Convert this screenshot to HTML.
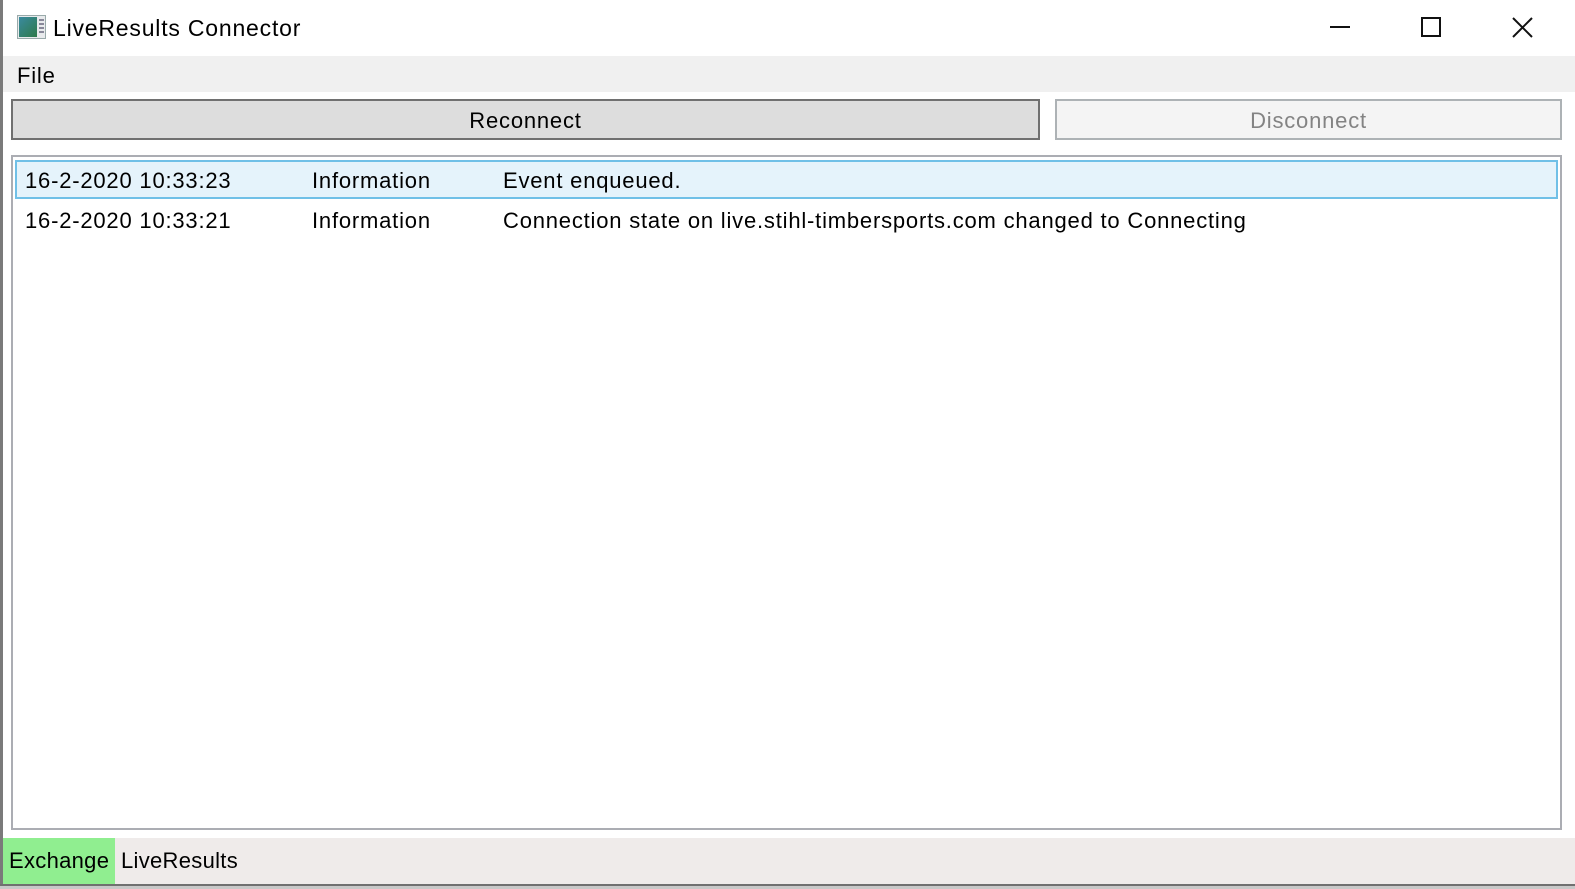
<!DOCTYPE html>
<html><head><style>
*{margin:0;padding:0;box-sizing:border-box}
body{width:1575px;height:889px;overflow:hidden;background:#fff;font-family:"Liberation Sans",sans-serif;position:relative;color:#000}
div{position:absolute}
.t{font-size:22px;white-space:nowrap;letter-spacing:0.8px}
</style></head><body>
<div style="left:0;top:0;width:3px;height:889px;background:#7a7a7a"></div>
<div style="left:17px;top:15px;width:29px;height:24px;background:#e8eaec;border:1px solid #9aa"></div>
<div style="left:19px;top:17px;width:18px;height:20px;background:linear-gradient(135deg,#3a8aa0,#2e7a4a)"></div>
<div style="left:39px;top:19px;width:5px;height:2px;background:#889;box-shadow:0 4px #889,0 8px #889,0 12px #889"></div>
<div class="t" style="left:53px;top:15px;font-size:23px">LiveResults Connector</div>
<svg style="position:absolute;left:1320px;top:10px" width="230" height="36">
<line x1="10" y1="17" x2="30" y2="17" stroke="#111" stroke-width="2"/>
<rect x="102" y="8" width="18" height="18" fill="none" stroke="#111" stroke-width="2"/>
<path d="M193 8 L212 27 M212 8 L193 27" stroke="#111" stroke-width="2"/>
</svg>
<div style="left:3px;top:56px;width:1572px;height:36px;background:#f0f0f0"></div>
<div class="t" style="left:17px;top:63px">File</div>
<div style="left:11px;top:99px;width:1029px;height:41px;background:#dddddd;border:2px solid #707070"></div>
<div class="t" style="left:11px;top:108px;width:1029px;text-align:center">Reconnect</div>
<div style="left:1055px;top:99px;width:507px;height:41px;background:#f4f4f4;border:2px solid #adb2b5"></div>
<div class="t" style="left:1055px;top:108px;width:507px;text-align:center;color:#838383">Disconnect</div>
<div style="left:11px;top:155px;width:1551px;height:675px;border:2px solid #abadb3;background:#fff"></div>
<div style="left:15px;top:160px;width:1543px;height:39px;background:#e5f3fb;border:2px solid #70c0e7"></div>
<div class="t" style="left:25px;top:168px">16-2-2020 10:33:23</div>
<div class="t" style="left:312px;top:168px">Information</div>
<div class="t" style="left:503px;top:168px">Event enqueued.</div>
<div class="t" style="left:25px;top:208px">16-2-2020 10:33:21</div>
<div class="t" style="left:312px;top:208px">Information</div>
<div class="t" style="left:503px;top:208px">Connection state on live.stihl-timbersports.com changed to Connecting</div>
<div style="left:3px;top:838px;width:1572px;height:47px;background:#efebea"></div>
<div style="left:3px;top:838px;width:112px;height:47px;background:#90ee90"></div>
<div class="t" style="left:9px;top:848px;letter-spacing:0.3px">Exchange</div>
<div class="t" style="left:121px;top:848px;letter-spacing:0.3px">LiveResults</div>
<div style="left:0;top:884px;width:1575px;height:2px;background:#707070"></div>
<div style="left:0;top:886px;width:1575px;height:3px;background:#c8c8c8"></div>
</body></html>
